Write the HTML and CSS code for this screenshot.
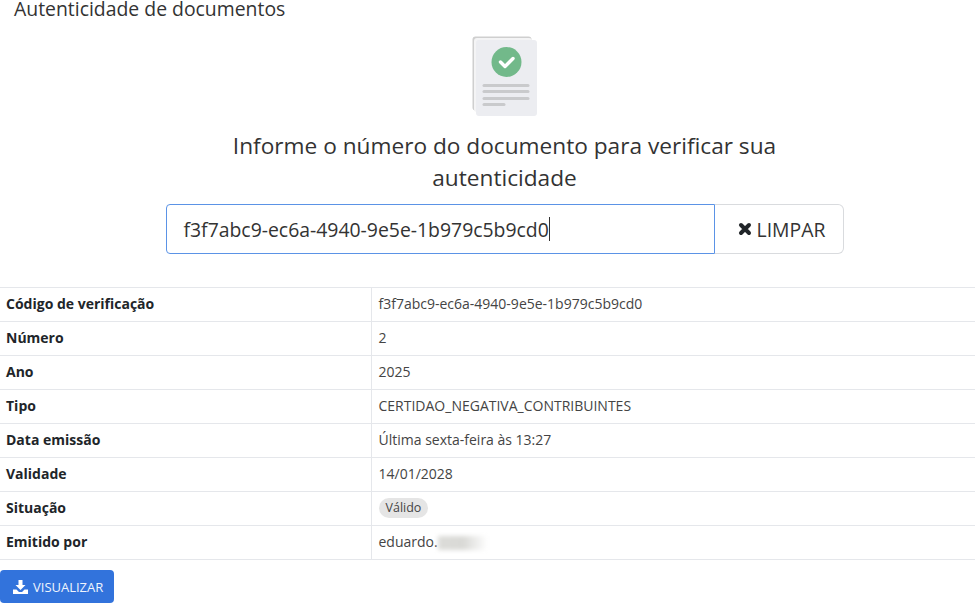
FILE: index.html
```html
<!DOCTYPE html>
<html lang="pt-BR">
<head>
<meta charset="utf-8">
<title>Autenticidade de documentos</title>
<link rel="stylesheet" href="styles.css">
</head>
<body>
<h1 class="page-title">Autenticidade de documentos</h1>
<section class="search">
  <svg class="doc-icon" width="66" height="82" viewBox="0 0 66 82">
    <rect x="0.5" y="0.5" width="59" height="74" rx="3" fill="#cfcfcf"/>
    <rect x="2" y="2" width="58" height="74" rx="3" fill="#f4f4f5"/>
    <rect x="4" y="4" width="61" height="76" rx="3" fill="#ecedf1"/>
    <circle cx="34.500" cy="26" r="15" fill="#72b98a"/>
    <path d="M28.500 26l4.500 4.500 8-8" fill="none" stroke="#fff" stroke-width="3.400" stroke-linecap="round" stroke-linejoin="round"/>
    <rect x="10.500" y="48" width="47" height="3" rx="1.500" fill="#c9cacc"/>
    <rect x="10.500" y="54" width="47" height="3" rx="1.500" fill="#c9cacc"/>
    <rect x="10.500" y="61" width="47" height="3" rx="1.500" fill="#c9cacc"/>
    <rect x="10.500" y="67" width="23" height="3" rx="1.500" fill="#c9cacc"/>
  </svg>
  <h2 class="prompt">Informe o número do documento para verificar sua autenticidade</h2>
  <div class="input-group">
    <div class="code-input"><span>f3f7abc9-ec6a-4940-9e5e-1b979c5b9cd0</span><i class="caret"></i></div>
    <button class="clear-btn" type="button">
      <svg width="14" height="14" viewBox="0 0 14 14"><path d="M3 3l8 8M11 3l-8 8" stroke="#212529" stroke-width="4" stroke-linecap="round"/></svg>
      LIMPAR
    </button>
  </div>
</section>
<table class="details">
  <tr><th>Código de verificação</th><td>f3f7abc9-ec6a-4940-9e5e-1b979c5b9cd0</td></tr>
  <tr><th>Número</th><td>2</td></tr>
  <tr><th>Ano</th><td>2025</td></tr>
  <tr><th>Tipo</th><td>CERTIDAO_NEGATIVA_CONTRIBUINTES</td></tr>
  <tr><th>Data emissão</th><td>Última sexta-feira às 13:27</td></tr>
  <tr><th>Validade</th><td>14/01/2028</td></tr>
  <tr><th>Situação</th><td><span class="badge">Válido</span></td></tr>
  <tr><th>Emitido por</th><td>eduardo.<span class="blurred"></span></td></tr>
</table>
<button class="view-btn" type="button">
  <svg width="15" height="14" viewBox="0 0 15 14"><path d="M5.500 0h4v5h3L7.500 10l-5-5h3z" fill="#fff"/><path d="M0 9.500h3.500l2.500 2.500h3l2.500-2.500H15V14H0z" fill="#fff"/></svg>
  VISUALIZAR
</button>
</body>
</html>
```

FILE: styles.css
```css
* { box-sizing: border-box; }
html, body { height: 606px; overflow: hidden; }
body {
  margin: 0;
  background: #fff;
  color: #212529;
  font-family: "Open Sans", sans-serif;
  font-size: 14px;
}
.page-title {
  margin: 0;
  padding-left: 14px;
  font-size: 19.400px;
  line-height: 18px;
  font-weight: 400;
  color: #333;
}
.search {
  display: flex;
  flex-direction: column;
  align-items: center;
  padding: 18px 0 0 34px;
  height: 269px;
}
.doc-icon { display: block; }
.prompt {
  margin: 12px 0 0;
  width: 600px;
  text-align: center;
  font-size: 22.670px;
  line-height: 32px;
  font-weight: 400;
  color: #333;
}
.input-group {
  display: flex;
  width: 678px;
  height: 50px;
  margin-top: 10px;
}
.code-input {
  display: flex;
  align-items: center;
  flex: 1;
  padding-left: 17px;
  border: 1px solid #5b93e6;
  border-radius: 4px 0 0 4px;
  font-size: 19.400px;
  color: #333;
}
.caret { width: 1px; height: 24px; background: #333; }
.clear-btn {
  display: flex;
  align-items: center;
  justify-content: center;
  gap: 5px;
  width: 129px;
  padding: 0 0 0 6px;
  border: 1px solid #d9dbde;
  border-left: 0;
  border-radius: 0 6px 6px 0;
  background: #fff;
  color: #333;
  font: 400 19.400px "Open Sans", sans-serif;
}
.details {
  width: 100%;
  border-collapse: collapse;
  table-layout: fixed;
}
.details tr { height: 34px; }
.details th, .details td {
  padding: 0 6px 2px 0;
  border-top: 1px solid #e5e7eb;
  border-bottom: 1px solid #e5e7eb;
  vertical-align: middle;
}
.details th {
  width: 371px;
  padding-left: 6px;
  text-align: left;
  font-weight: 700;
  border-right: 1px solid #e5e7eb;
  color: #212529;
}
.details td { padding-left: 7px; color: #444; }
.badge {
  display: inline-block;
  padding: 0 7px;
  border-radius: 10px;
  background: #e5e5e5;
  font-size: 12.500px;
  line-height: 20px;
}
.blurred {
  display: inline-block;
  width: 50px;
  height: 14px;
  vertical-align: middle;
  background: linear-gradient(90deg, #dcdcd9 0%, #d9d9d6 50%, #fff 100%);
  filter: blur(2px);
}
.view-btn {
  display: flex;
  align-items: center;
  gap: 5px;
  margin-top: 10px;
  height: 33px;
  width: 114px;
  padding: 0 0 0 13px;
  border: 0;
  border-radius: 4px;
  background: #3273dc;
  color: #eef4fd;
  font: 400 13px "Open Sans", sans-serif;
}
```
